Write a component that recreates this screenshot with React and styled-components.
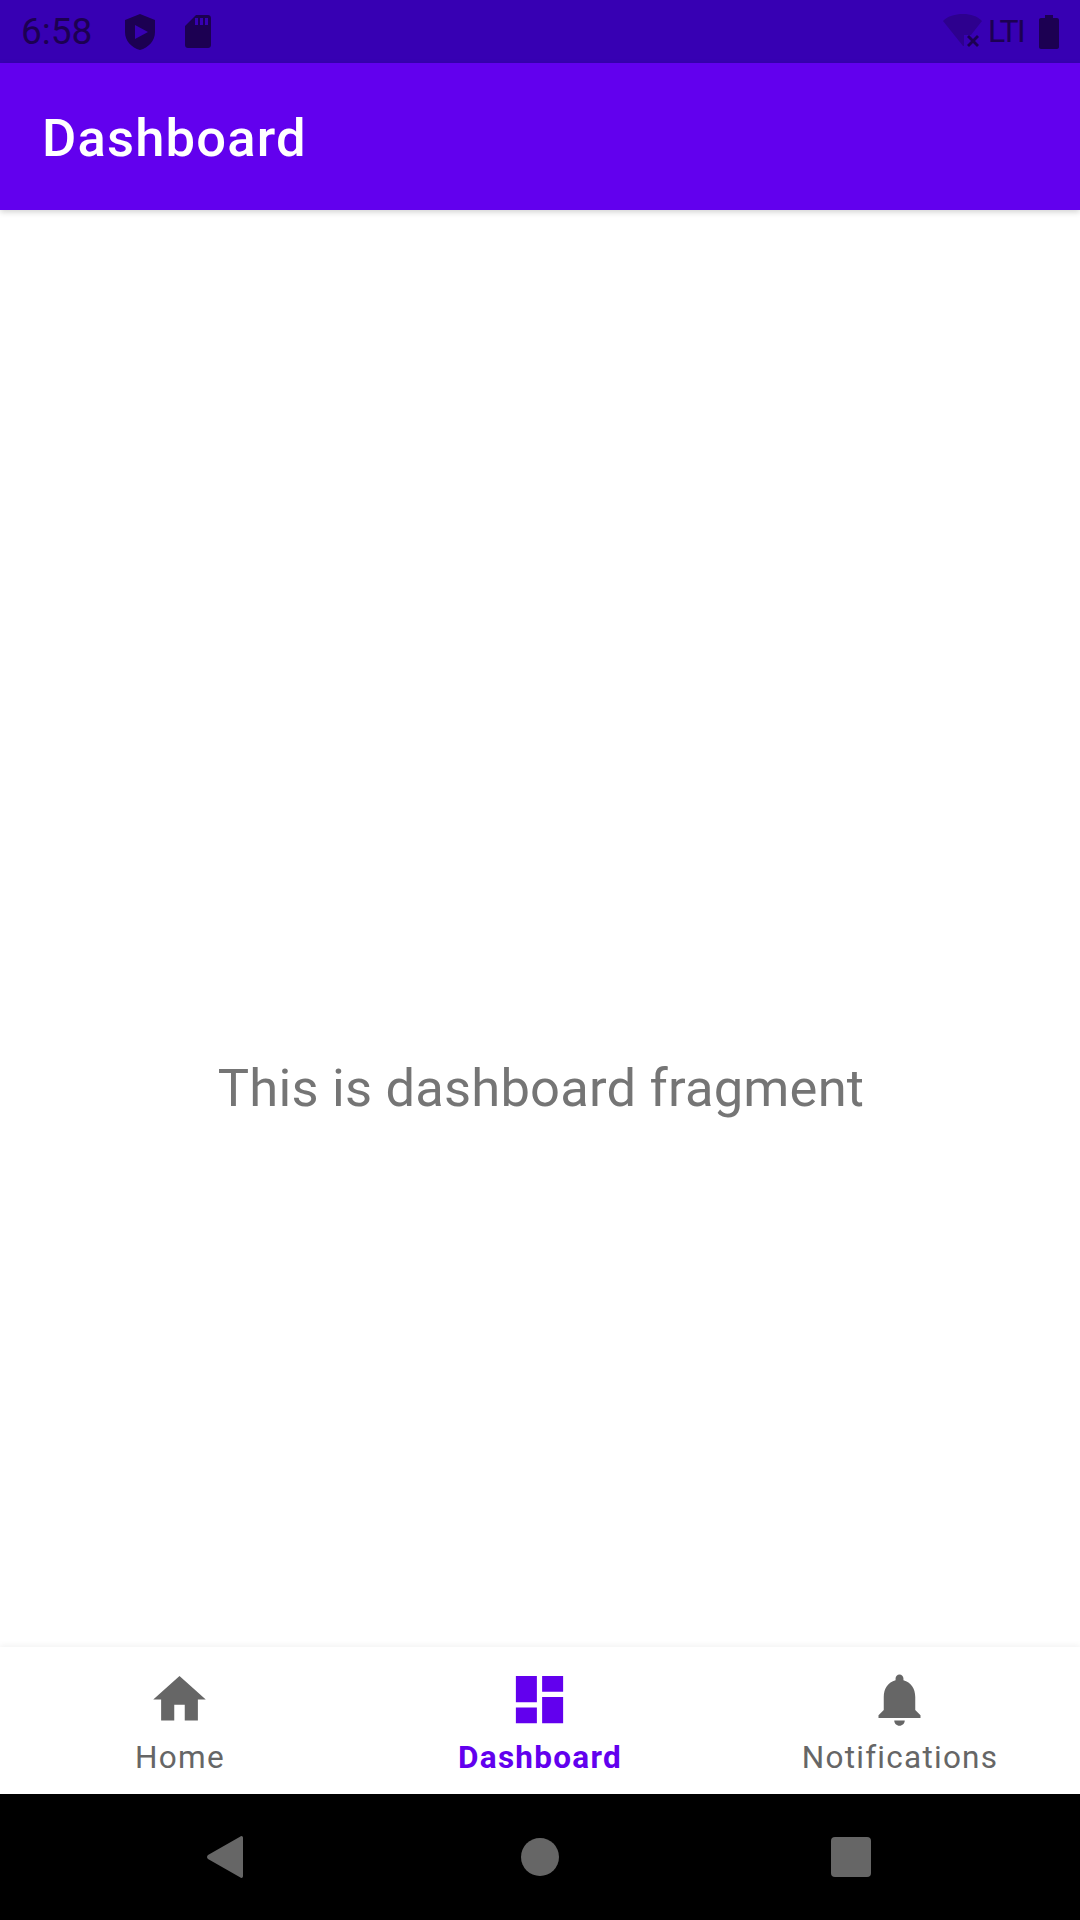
import React from "react";
import styled, { createGlobalStyle } from "styled-components";

const GlobalStyle = createGlobalStyle`
  html, body {
    margin: 0;
    padding: 0;
    background: #fff;
  }
  * {
    box-sizing: border-box;
  }
`;

const navItems = [
  {
    label: "Home",
    path: "M10 20v-6h4v6h5v-8h3L12 3 2 12h3v8z",
  },
  {
    label: "Dashboard",
    active: true,
    path: "M3 13h8V3H3v10zm0 8h8v-6H3v6zm10 0h8V11h-8v10zm0-18v6h8V3h-8z",
  },
  {
    label: "Notifications",
    path: "M12 22c1.1 0 2-.9 2-2h-4c0 1.1.89 2 2 2zm6-6v-5c0-3.07-1.64-5.64-4.5-6.32V4c0-.83-.67-1.5-1.5-1.5s-1.5.67-1.5 1.5v.68C7.63 5.36 6 7.92 6 11v5l-2 2v1h16v-1l-2-2z",
  },
];

const App = () => {
  return (
    <Screen>
      <GlobalStyle />
      <StatusBar>
        <StatusGroup>
          <Clock>6:58</Clock>
          <ShieldIcon viewBox="0 0 30 36">
            <path
              fillRule="evenodd"
              d="M15 0 30 6v12c0 9-6.500 15.500-15 18C6.500 33.500 0 27 0 18V6zM10 11v14l13-7z"
            />
          </ShieldIcon>
          <SdIcon viewBox="0 0 26 33">
            <path
              fillRule="evenodd"
              d="M11 0h12c1.700 0 3 1.300 3 3v27c0 1.700-1.300 3-3 3H3c-1.700 0-3-1.300-3-3V11zM10 3v7h3V3zm5 0v7h3V3zm5 0v7h3V3z"
            />
          </SdIcon>
        </StatusGroup>
        <StatusGroup>
          <WifiIcon viewBox="0 0 39 33">
            <path opacity="0.38" d="M0 7C5 2 12 0 20 0s14 2 19 7l-11 14h-7v11h-1z" />
            <path d="M24 23l2-2 4 4 4-4 2 2-4 4 4 4-2 2-4-4-4 4-2-2 4-4z" />
          </WifiIcon>
          <NetworkLabel>LTI</NetworkLabel>
          <BatteryIcon viewBox="0 0 20 34">
            <path d="M6 0h8v3h4c1.100 0 2 .9 2 2v27c0 1.100-.9 2-2 2H2c-1.100 0-2-.9-2-2V5c0-1.100.9-2 2-2h4z" />
          </BatteryIcon>
        </StatusGroup>
      </StatusBar>

      <AppBar>
        <AppTitle>Dashboard</AppTitle>
      </AppBar>

      <Content>
        <FragmentText>This is dashboard fragment</FragmentText>
      </Content>

      <BottomNav>
        {navItems.map((item) => (
          <NavItem key={item.label} $active={item.active}>
            <NavIcon viewBox="0 0 24 24">
              <path d={item.path} />
            </NavIcon>
            <NavLabel $active={item.active}>{item.label}</NavLabel>
          </NavItem>
        ))}
      </BottomNav>

      <SystemBar>
        <SystemIcon viewBox="0 0 36 42" $width={36}>
          <path d="M33 .7C34.500-.5 36 .2 36 2v38c0 1.800-1.500 2.500-3 1.300L1 23c-1.300-1-1.300-3 0-4z" />
        </SystemIcon>
        <SystemIcon viewBox="0 0 38 38" $width={38} $gap={278}>
          <circle cx="19" cy="19" r="19" />
        </SystemIcon>
        <SystemIcon viewBox="0 0 40 40" $width={40} $gap={272}>
          <rect width="40" height="40" rx="4" />
        </SystemIcon>
      </SystemBar>
    </Screen>
  );
};

const Screen = styled.div`
  display: flex;
  flex-direction: column;
  width: 1080px;
  height: 1920px;
  overflow: hidden;
  background: #fff;
  font-family: Roboto, "Liberation Sans", sans-serif;
`;

const StatusBar = styled.div`
  display: flex;
  flex: 0 0 63px;
  align-items: center;
  justify-content: space-between;
  padding: 0 21px 0 21px;
  background: #3700b3;
  color: #1c0052;
  fill: #1c0052;
`;

const StatusGroup = styled.div`
  display: flex;
  align-items: center;
`;

const Clock = styled.span`
  font-size: 37px;
  line-height: 63px;
`;

const ShieldIcon = styled.svg`
  width: 30px;
  height: 36px;
  margin-left: 33px;
`;

const SdIcon = styled.svg`
  width: 26px;
  height: 33px;
  margin-left: 30px;
`;

const WifiIcon = styled.svg`
  width: 39px;
  height: 33px;
  margin-top: -3px;
`;

const NetworkLabel = styled.span`
  margin-left: 6px;
  font-size: 32px;
  line-height: 63px;
  letter-spacing: -1.6px;
`;

const BatteryIcon = styled.svg`
  width: 20px;
  height: 34px;
  margin-left: 15px;
`;

const AppBar = styled.header`
  position: relative;
  z-index: 1;
  display: flex;
  flex: 0 0 147px;
  align-items: center;
  padding: 2px 0 0 42px;
  background: #6200ee;
  box-shadow: 0 2px 6px rgba(0, 0, 0, 0.18);
`;

const AppTitle = styled.h1`
  margin: 0;
  color: #fff;
  font-size: 52.5px;
  font-weight: 500;
  letter-spacing: 1.2px;
`;

const Content = styled.main`
  display: flex;
  flex: 1;
  align-items: center;
  justify-content: center;
  padding: 319px 0 0 2px;
`;

const FragmentText = styled.p`
  margin: 0;
  color: #757575;
  font-size: 52.5px;
  letter-spacing: 0.2px;
`;

const BottomNav = styled.nav`
  position: relative;
  display: grid;
  flex: 0 0 147px;
  grid-template-columns: repeat(3, 1fr);
  background: #fff;
  box-shadow: 0 -2px 6px rgba(0, 0, 0, 0.05);
`;

const NavItem = styled.div`
  display: flex;
  flex-direction: column;
  align-items: center;
  padding-top: 21px;
  color: ${(props) => (props.$active ? "#6200ee" : "#666666")};
  fill: currentColor;
`;

const NavIcon = styled.svg`
  width: 63px;
  height: 63px;
  margin-right: 1px;
`;

const NavLabel = styled.span`
  margin-top: 8px;
  font-size: 31.5px;
  font-weight: ${(props) => (props.$active ? 700 : 400)};
  line-height: 38px;
  letter-spacing: 0.04em;
`;

const SystemBar = styled.div`
  display: flex;
  flex: 0 0 126px;
  align-items: center;
  padding-left: 207px;
  background: #000;
  fill: #666666;
`;

const SystemIcon = styled.svg`
  width: ${(props) => props.$width}px;
  height: ${(props) => (props.$width > 36 ? props.$width : 42)}px;
  margin-left: ${(props) => props.$gap || 0}px;
`;

export default App;
